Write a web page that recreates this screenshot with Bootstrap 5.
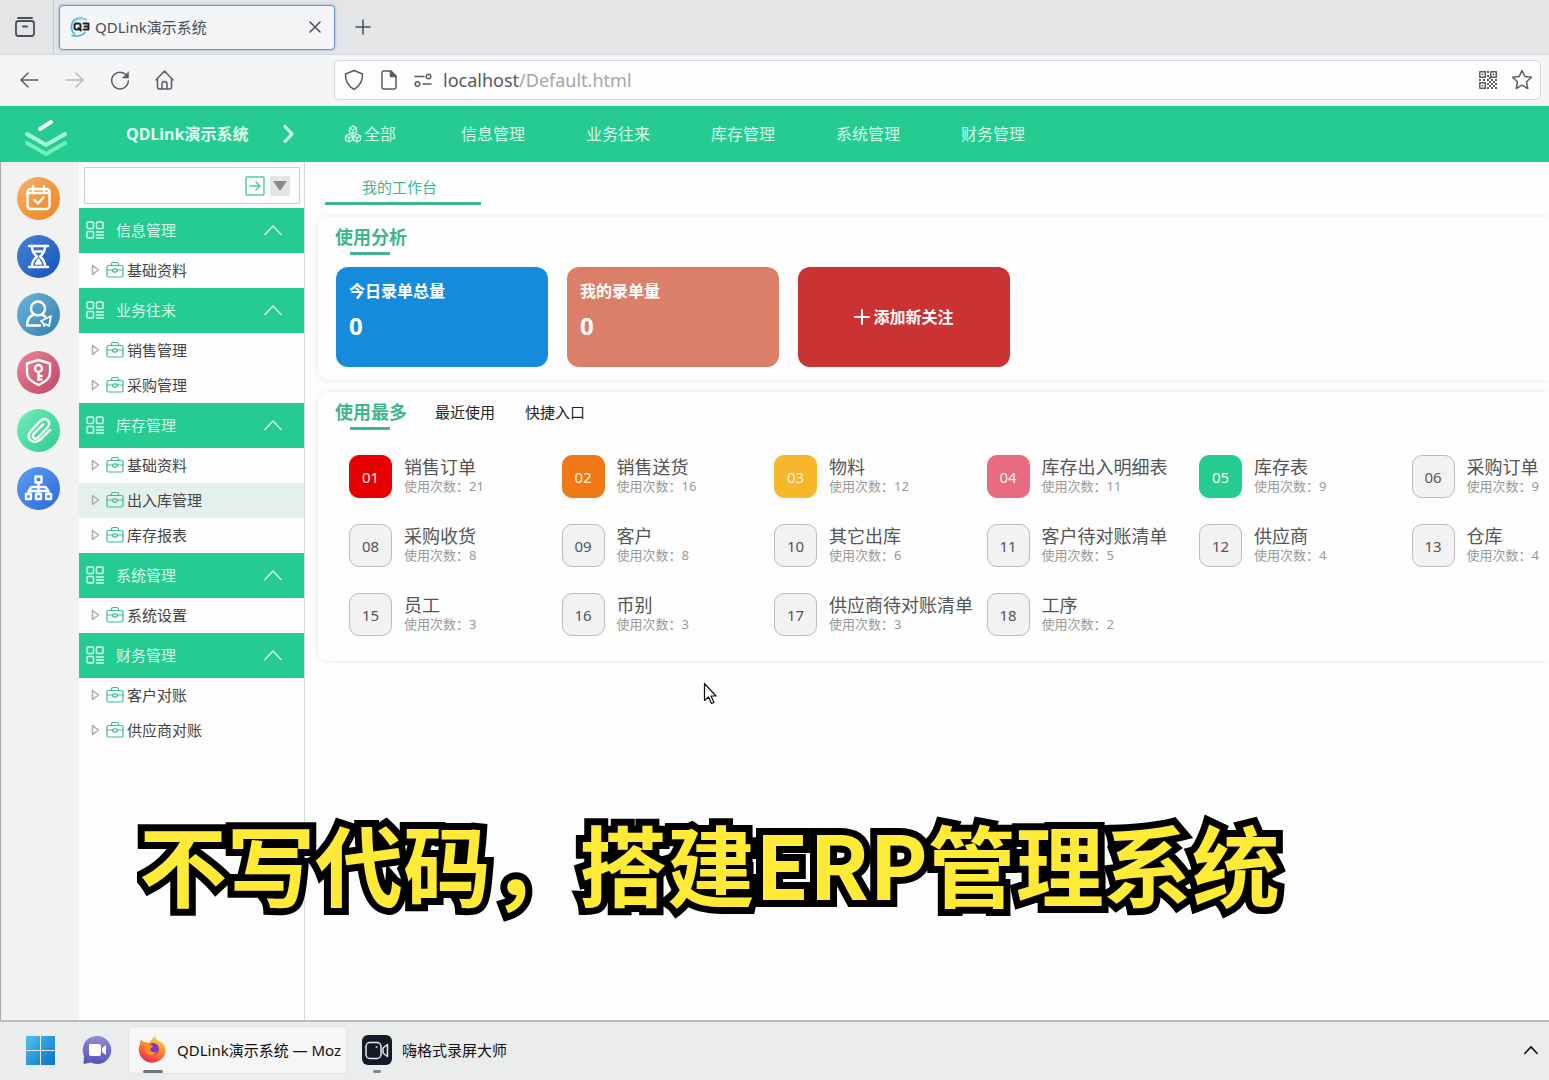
<!DOCTYPE html>
<html lang="zh-CN">
<head>
<meta charset="utf-8">
<meta name="viewport" content="width=device-width, initial-scale=1">
<title>QDLink演示系统</title>
<link href="https://cdn.jsdelivr.net/npm/bootstrap@5.3.0/dist/css/bootstrap.min.css" rel="stylesheet">
<style>
:root{--brand:#26cb92;--brand-ink:#3fb68f}
body{font-family:"Noto Sans","Noto Sans CJK SC",sans-serif;font-size:15px;line-height:20px;color:#444;background:#fdfdfd}
svg{display:block;flex:none;fill:none;stroke:currentColor;stroke-width:1.5;stroke-linecap:round;stroke-linejoin:round}
button{font:inherit;color:inherit;background:none;border:0;padding:0}
a{color:inherit;text-decoration:none}
.i16{width:16px;height:16px}.i18{width:18px;height:18px}.i20{width:20px;height:20px}.i22{width:22px;height:22px}
.desk{min-height:100vh}
/* browser chrome */
.tabstrip{height:55px;background:#e3e5e7;border-bottom:1px solid #d3d6da;color:#4a4e5a}
.tabstrip .lib{width:54px;height:54px;border-right:1px solid #c6cad0;padding-left:14px}
.tabstrip .lib svg{stroke-width:1.8}
.tabbox{width:276px;height:45px;margin-left:5px;padding:0 11px 0 9px;background:#f3f5f7;border:1px solid #6d95c8;border-radius:4px;box-shadow:0 0 3px #8aa5c8}
.toolbar{height:51px;background:#f3f5f7;color:#5a5d62;padding:0 8px 2px 19px}
.toolbar .navs{width:315px;gap:23px}
.toolbar .off{color:#b7babd}
.addr{height:40px;background:#fdfdfe;border:1px solid #d5dade;border-radius:5px;padding:0 7px 0 8px;gap:13px}
.addr .url{font-size:18px;color:#a3a6a9;margin-left:-3px}.addr .url b{font-weight:400;color:#56595d}
/* application header */
.apphead{height:56px;background:var(--brand);color:#d3faea;font-size:16px}
.apphead .logo{width:44px;height:40px;margin:9px 0 0 24px;stroke-width:4}
.apphead .title{margin-left:58px;width:156px;font-weight:700;color:#e0fcf1}
.apphead .menu{gap:60px;margin-left:48px}
.apphead .menu a{width:65px;white-space:nowrap}
.apphead .menu a.all{width:57px}
.apphead .all svg{stroke-width:1.3;margin-right:2px}
.apphead .chev{width:14px;height:18px;stroke-width:3}
/* rail */
.rail{width:79px;background:#f2f2f2;border-left:1px solid #aaa;padding:15px 0 0 16px;gap:15px}
.rail button{width:43px;height:43px;border-radius:50%;color:#fff}
.rail svg{width:29px;height:29px;stroke-width:2.4}
.c1{background:linear-gradient(135deg,#f4b169,#ef841d)}.c2{background:linear-gradient(135deg,#4a83d3,#1452bf)}
.c3{background:linear-gradient(135deg,#67b5da,#397fae)}.c4{background:linear-gradient(135deg,#ea8598,#bd4764)}
.c5{background:linear-gradient(135deg,#72edba,#2dcc91)}.c6{background:linear-gradient(135deg,#5b9df4,#2d69de)}
/* side menu */
.side{width:226px;border-right:1px solid #d4d4d4}
.search{height:37px;margin:5px 4px 4px 5px;border:1px solid #cfcfcf;padding:0 9px 0 8px;gap:5px}
.search input{border:0;outline:0;background:none;min-width:0}
.search button{flex:none;color:#58c9a2}
.search .drop{width:20px;height:20px;background:#e3e4e6;border-radius:2px}
.tri{width:14px;height:10px;fill:#8a8a8a;stroke:none}
.grp{height:45px;background:var(--brand);color:#d3faea;padding:0 22px 1px 7px}
.grp span{margin-left:12px}
.leaf{height:35px;padding:0 0 1px 12px}
.leaf.on{background:#e3f0eb}
.leaf .arr{width:9px;height:12px;color:#aaa;margin-right:6px}
.leaf .bag{width:18px;height:18px;color:#3fbf90;margin-right:3px;stroke-width:1.2}
/* content */
.worktab{width:156px;height:43px;margin-left:20px;border-bottom:3px solid var(--brand-ink);color:var(--brand-ink);line-height:50px;padding-left:37px;text-align:left}
.panelbox{margin:12px 0 0 13px;border-radius:10px 0 0 10px;box-shadow:0 0 6px rgba(0,0,0,.09);background:#fdfdfd;padding:10px 0 0 17px}
.h-on{font-size:18px;font-weight:700;color:var(--brand-ink);height:28px;width:70px;white-space:nowrap;text-align:left}
.h-on::after{content:"";display:block;width:40px;height:3px;margin:5px 0 0 15px;background:var(--brand-ink)}
.stats{gap:19px;margin:12px 0 0 1px;padding-bottom:13px}
.stat{width:212px;height:100px;border-radius:12px;color:#fff;padding:14px 13px;font-weight:700;font-size:16px}
.stat .num{font-size:24px;line-height:30px;margin-top:10px}
.s1{background:#168bdb}.s2{background:#dc7f69}.s3{background:#ca3233}
.s3 svg{stroke-width:2;margin-right:3px}
.usage{display:grid;grid-template-columns:repeat(6,1fr);row-gap:26px;margin:25px -75px 0 14px;padding-bottom:25px}
.usage a{gap:12px;height:43px;white-space:nowrap}
.usage span{padding-bottom:2px}
.usage i{font-style:normal;width:43px;height:43px;border-radius:10px;border:1px solid #bbb;background:#f2f2f3;color:#555;flex:none}
.usage .n1{background:#e60000;border-color:#e60000}.usage .n2{background:#f17817;border-color:#f17817}.usage .n3{background:#f6b72b;border-color:#f6b72b}
.usage .n4{background:#e96b82;border-color:#e96b82}.usage .n5{background:#26cb92;border-color:#26cb92}
.usage .n1,.usage .n2,.usage .n3,.usage .n4,.usage .n5{color:#fff2e0}
.usage strong{display:block;font-weight:400;font-size:18px;line-height:20px;color:#555}
.usage em{display:block;font-style:normal;font-size:13px;line-height:18px;color:#999}
.others{gap:30px;margin-left:30px;color:#222}
/* task bar */
.taskbar{height:60px;background:#ebecec;border-top:2px solid #b9bbbb;color:#111;padding:0 11px 2px 26px}
.taskbar .chat{margin:0 16px 0 26px}
.task{height:48px;padding:0 9px;border-radius:5px;gap:10px;margin-right:6px}
.task.on{width:219px;background:#f6f6f6;border:1px solid #e2e2e2;padding-right:3px}
.ico{height:46px;position:relative}
.ico::after{content:"";position:absolute;bottom:0;left:50%;transform:translateX(-50%);width:8px;height:3px;border-radius:2px;background:#888}
.task.on .ico::after{width:20px;background:#6c7a86}
.taskbar .more{width:14px;height:10px;stroke-width:2}
/* floating layers */
.subtitle{position:absolute;left:137px;top:778px;width:1160px;height:160px;pointer-events:none}
.subtitle text{font:700 88px "Noto Sans CJK SC",sans-serif;fill:#ffea37;stroke:#000;stroke-width:14px;paint-order:stroke;stroke-linejoin:miter;stroke-miterlimit:8}
.pointer{position:absolute;left:703px;top:682px;width:15px;height:23px;fill:#fff;stroke:#111;stroke-width:1.2}
</style>
<script src="https://cdn.jsdelivr.net/npm/bootstrap@5.3.0/dist/js/bootstrap.bundle.min.js" defer></script>
</head>
<body>
<svg class="d-none">
<symbol id="up" viewBox="0 0 18 12"><path d="M1 10.500 9 2l8 8.500"/></symbol>
<symbol id="grid" viewBox="0 0 18 18"><rect x="1" y="1" width="6.500" height="6.500" rx="1"/><rect x="10.500" y="1" width="6.500" height="6.500" rx="1"/><rect x="1" y="10.500" width="6.500" height="6.500" rx="1"/><path d="M10.500 11h7M10.500 14h7M10.500 17h7"/></symbol>
<symbol id="arr" viewBox="0 0 9 12"><path d="M1.500 1.500v9L7.500 6z"/></symbol>
<symbol id="bag" viewBox="0 0 18 18"><rect x="1" y="4.500" width="16" height="11.500" rx="1.500"/><path d="M5.500 4.500V3q0-1.500 1.500-1.500h4q1.500 0 1.500 1.500v1.500M1 9h5.500M11.500 9H17"/><ellipse cx="9" cy="9.500" rx="2.500" ry="1.600"/></symbol>
</svg>
<div class="desk d-flex flex-column position-relative overflow-hidden">
<header class="tabstrip d-flex align-items-center">
  <button class="lib" aria-label="标签页列表"><svg class="i22" viewBox="0 0 22 22"><path d="M4 2h14"/><rect x="2" y="5" width="18" height="15" rx="2.500"/><path d="M9 10.500h4"/></svg></button>
  <div class="tabbox d-flex align-items-center">
    <svg class="i22" viewBox="0 0 22 22"><path d="M17 3.500C11 0 3 3 2.500 10c-.2 3 .8 6 3 8M3 19.500c5 1 10 .5 13-3" stroke="#39b6d8" stroke-width="1.600"/><path d="M5 6q5-5 12-2" stroke="#8de0ec"/><rect x="5.500" y="7.500" width="6" height="6" rx="2" stroke="#222" stroke-width="2"/><path d="m9.500 12 2.500 2.500M14.500 7.500h5v6h-5M15.500 10.500h4" stroke="#222" stroke-width="1.900"/></svg>
    <span class="ms-1 flex-grow-1">QDLink演示系统</span>
    <button aria-label="关闭"><svg class="i16" viewBox="0 0 16 16"><path d="m3 3 10 10M13 3 3 13"/></svg></button>
  </div>
  <button class="ms-3 ps-1" aria-label="新建标签页"><svg class="i16" viewBox="0 0 16 16"><path d="M8 1v14M1 8h14"/></svg></button>
</header>
<div class="toolbar d-flex align-items-center">
  <div class="navs d-flex flex-shrink-0">
    <button aria-label="后退"><svg class="i22" viewBox="0 0 22 22"><path d="M19 11H2m7-7-7 7 7 7"/></svg></button>
    <button class="off" aria-label="前进"><svg class="i22" viewBox="0 0 22 22"><path d="M2 11h17m-7-7 7 7-7 7"/></svg></button>
    <button aria-label="刷新"><svg class="i22" viewBox="0 0 22 22"><path d="M18.500 8A8.300 8.300 0 1 0 19.300 12"/><path d="M19.500 3v6h-6z" fill="currentColor" stroke-width=".5"/></svg></button>
    <button aria-label="主页"><svg class="i22" viewBox="0 0 22 22"><path d="m2 11 8.500-9 8.500 9M3.500 9.500V18q0 2 2 2h10q2 0 2-2V9.500M8 20v-5q0-2.500 2.500-2.500T13 15v5"/></svg></button>
  </div>
  <div class="addr d-flex align-items-center flex-grow-1">
    <svg class="i22" viewBox="0 0 22 22"><path d="M11 1.500 19.500 5q.5 10-8.500 15.500Q2 15 2.500 5z"/></svg>
    <svg class="i22" viewBox="0 0 22 22"><path d="M4 4q0-2 2-2h7l5 5v11q0 2-2 2H6q-2 0-2-2z"/><path d="M12.500 2v5.500H18z" fill="currentColor"/></svg>
    <svg class="i20" viewBox="0 0 20 20"><path d="M2 6.500h9M10 14h8"/><circle cx="15.500" cy="6.500" r="2.300"/><circle cx="4.500" cy="14" r="2.300"/></svg>
    <a href="#" class="url flex-grow-1"><b>localhost</b>/Default.html</a>
    <svg class="i20" viewBox="0 0 20 20"><rect x="1.800" y="1.800" width="5.500" height="5.500"/><rect x="12.800" y="1.800" width="5.500" height="5.500"/><rect x="1.800" y="12.800" width="5.500" height="5.500"/><g fill="currentColor" stroke="none"><path d="M3.800 3.800h1.500v1.500H3.800zM14.800 3.800h1.500v1.500h-1.500zM3.800 14.800h1.500v1.500H3.800zM9 1h2v2H9zM9 5h2v2H9zM11 7h2v2h-2zM9 9h2v2H9zM1 9h2v2H1zM5 9h2v2H5zM13 9h2v2h-2zM17 9h2v2h-2zM11 11h2v2h-2zM15 11h2v2h-2zM9 13h2v2H9zM13 13h2v2h-2zM17 13h2v2h-2zM11 15h2v2h-2zM15 15h2v2h-2zM9 17h2v2H9zM13 17h2v2h-2zM17 17h2v2h-2z"/></g></svg>
    <svg class="i22" viewBox="0 0 22 22"><path d="m11 1.500 2.800 6 6.700.8-5 4.500 1.300 6.700-5.800-3.300-5.800 3.300 1.300-6.700-5-4.500 6.700-.8z"/></svg>
  </div>
</div>

<nav class="apphead d-flex align-items-center">
  <svg class="logo" viewBox="0 0 44 40"><path d="m16 10 11-7" stroke="#e4fff5"/><path d="m3 15 19 11 19-11" stroke="#a9f9da"/><path d="m3 24 19 11 19-11" stroke="#6ff0bd"/></svg>
  <a href="#" class="title">QDLink演示系统</a>
  <svg class="chev" viewBox="0 0 14 18"><path d="m3 1.500 7 7.500-7 7.500"/></svg>
  <div class="menu d-flex">
    <a href="#" class="all d-flex align-items-center"><svg class="i18" viewBox="0 0 18 18"><path d="m9 1 3.500 2v4L9 9 5.500 7V3zM5 9l3.500 2v4L5 17l-3.500-2v-4zM13 9l3.500 2v4L13 17l-3.500-2v-4zM5.500 3 9 5l3.500-2M9 5v4M1.500 11 5 13l3.500-2M5 13v4M9.500 11l3.500 2 3.500-2M13 13v4"/></svg>全部</a>
    <a href="#">信息管理</a><a href="#">业务往来</a><a href="#">库存管理</a><a href="#">系统管理</a><a href="#">财务管理</a>
  </div>
</nav>

<div class="d-flex flex-grow-1">
  <aside class="rail d-flex flex-column flex-shrink-0">
    <button class="c1 d-flex align-items-center justify-content-center" aria-label="日程"><svg viewBox="0 0 29 29"><rect x="3.500" y="5" width="22" height="20" rx="3"/><path d="M9 2v6M20 2v6M4 9h21M10.500 16l3.500 3.500 5.500-6"/></svg></button>
    <button class="c2 d-flex align-items-center justify-content-center" aria-label="待办"><svg viewBox="0 0 29 29"><path d="M5 4h19M5 25h19M8 5c0 5 2 7 5 9.500C10 17 8 19 8 24M21 5c0 5-2 7-5 9.500 3 2.500 5 4.500 5 9.500"/><path d="m11.500 22 3-5 3 5z" fill="currentColor" stroke-width="1.500"/><path d="M11.500 9.500h6"/></svg></button>
    <button class="c3 d-flex align-items-center justify-content-center" aria-label="用户"><svg viewBox="0 0 29 29"><circle cx="14" cy="8.500" r="7"/><path d="M10 14.500Q3 17 3 25.500h13M18 14.500l3 2"/><path d="m17 21 10-5-2 10-4-2-1 2-1-3z" stroke-width="1.800"/></svg></button>
    <button class="c4 d-flex align-items-center justify-content-center" aria-label="权限"><svg viewBox="0 0 29 29"><path d="M14.500 2 26 5.500V15q0 7-11.500 12Q3 22 3 15V5.500z"/><circle cx="14.500" cy="10.500" r="3.500"/><path d="M14.500 14v8M15 18h2.500M15 21.500h2.500"/></svg></button>
    <button class="c5 d-flex align-items-center justify-content-center" aria-label="附件"><svg viewBox="0 0 29 29"><path d="m26 14-9.500 9.500c-7 6-16-1-10-8L16 5c6-5 12.500 1 7 7l-9 9.500c-3 3-7-.5-4-4l9-9"/></svg></button>
    <button class="c6 d-flex align-items-center justify-content-center" aria-label="组织"><svg viewBox="0 0 29 29"><rect x="11.500" y="2.500" width="6" height="6"/><rect x="2" y="20" width="5" height="5"/><rect x="12" y="20" width="5" height="5"/><rect x="22" y="20" width="5" height="5"/><path d="M14.500 9v10M4.500 19v-2l3-4h14l3 4v2M4.500 17h20"/></svg></button>
  </aside>
  <aside class="side flex-shrink-0">
    <div class="search d-flex align-items-center">
      <input type="text" aria-label="搜索菜单" class="flex-grow-1">
      <button aria-label="跳转"><svg class="i20" viewBox="0 0 20 20"><rect x="1" y="1" width="18" height="18" rx="1"/><path d="M5 10h10m-4-4 4 4-4 4"/></svg></button>
      <button class="drop d-flex align-items-center justify-content-center" aria-label="展开"><svg class="tri" viewBox="0 0 14 10"><path d="M0 0h14L7 10z"/></svg></button>
    </div>
    <a href="#" class="grp d-flex align-items-center"><svg class="i18"><use href="#grid"/></svg><span class="flex-grow-1">信息管理</span><svg width="18" height="12"><use href="#up"/></svg></a>
    <a href="#" class="leaf d-flex align-items-center"><svg class="arr"><use href="#arr"/></svg><svg class="bag"><use href="#bag"/></svg>基础资料</a>
    <a href="#" class="grp d-flex align-items-center"><svg class="i18"><use href="#grid"/></svg><span class="flex-grow-1">业务往来</span><svg width="18" height="12"><use href="#up"/></svg></a>
    <a href="#" class="leaf d-flex align-items-center"><svg class="arr"><use href="#arr"/></svg><svg class="bag"><use href="#bag"/></svg>销售管理</a>
    <a href="#" class="leaf d-flex align-items-center"><svg class="arr"><use href="#arr"/></svg><svg class="bag"><use href="#bag"/></svg>采购管理</a>
    <a href="#" class="grp d-flex align-items-center"><svg class="i18"><use href="#grid"/></svg><span class="flex-grow-1">库存管理</span><svg width="18" height="12"><use href="#up"/></svg></a>
    <a href="#" class="leaf d-flex align-items-center"><svg class="arr"><use href="#arr"/></svg><svg class="bag"><use href="#bag"/></svg>基础资料</a>
    <a href="#" class="leaf on d-flex align-items-center"><svg class="arr"><use href="#arr"/></svg><svg class="bag"><use href="#bag"/></svg>出入库管理</a>
    <a href="#" class="leaf d-flex align-items-center"><svg class="arr"><use href="#arr"/></svg><svg class="bag"><use href="#bag"/></svg>库存报表</a>
    <a href="#" class="grp d-flex align-items-center"><svg class="i18"><use href="#grid"/></svg><span class="flex-grow-1">系统管理</span><svg width="18" height="12"><use href="#up"/></svg></a>
    <a href="#" class="leaf d-flex align-items-center"><svg class="arr"><use href="#arr"/></svg><svg class="bag"><use href="#bag"/></svg>系统设置</a>
    <a href="#" class="grp d-flex align-items-center"><svg class="i18"><use href="#grid"/></svg><span class="flex-grow-1">财务管理</span><svg width="18" height="12"><use href="#up"/></svg></a>
    <a href="#" class="leaf d-flex align-items-center"><svg class="arr"><use href="#arr"/></svg><svg class="bag"><use href="#bag"/></svg>客户对账</a>
    <a href="#" class="leaf d-flex align-items-center"><svg class="arr"><use href="#arr"/></svg><svg class="bag"><use href="#bag"/></svg>供应商对账</a>
  </aside>
  <main class="flex-grow-1 overflow-hidden">
    <button class="worktab d-block">我的工作台</button>
    <section class="panelbox">
      <div class="h-on">使用分析</div>
      <div class="stats d-flex">
        <div class="stat s1"><div>今日录单总量</div><div class="num">0</div></div>
        <div class="stat s2"><div>我的录单量</div><div class="num">0</div></div>
        <button class="stat s3 d-flex align-items-center justify-content-center"><svg class="i16" viewBox="0 0 16 16"><path d="M8 1v14M1 8h14"/></svg>添加新关注</button>
      </div>
    </section>
    <section class="panelbox">
      <div class="d-flex align-items-start">
        <button class="h-on">使用最多</button>
        <div class="others d-flex"><button>最近使用</button><button>快捷入口</button></div>
      </div>
      <div class="usage">
        <a href="#" class="d-flex align-items-center"><i class="n1 d-flex align-items-center justify-content-center">01</i><span><strong>销售订单</strong><em>使用次数：21</em></span></a>
        <a href="#" class="d-flex align-items-center"><i class="n2 d-flex align-items-center justify-content-center">02</i><span><strong>销售送货</strong><em>使用次数：16</em></span></a>
        <a href="#" class="d-flex align-items-center"><i class="n3 d-flex align-items-center justify-content-center">03</i><span><strong>物料</strong><em>使用次数：12</em></span></a>
        <a href="#" class="d-flex align-items-center"><i class="n4 d-flex align-items-center justify-content-center">04</i><span><strong>库存出入明细表</strong><em>使用次数：11</em></span></a>
        <a href="#" class="d-flex align-items-center"><i class="n5 d-flex align-items-center justify-content-center">05</i><span><strong>库存表</strong><em>使用次数：9</em></span></a>
        <a href="#" class="d-flex align-items-center"><i class="d-flex align-items-center justify-content-center">06</i><span><strong>采购订单</strong><em>使用次数：9</em></span></a>
        <a href="#" class="d-flex align-items-center"><i class="d-flex align-items-center justify-content-center">08</i><span><strong>采购收货</strong><em>使用次数：8</em></span></a>
        <a href="#" class="d-flex align-items-center"><i class="d-flex align-items-center justify-content-center">09</i><span><strong>客户</strong><em>使用次数：8</em></span></a>
        <a href="#" class="d-flex align-items-center"><i class="d-flex align-items-center justify-content-center">10</i><span><strong>其它出库</strong><em>使用次数：6</em></span></a>
        <a href="#" class="d-flex align-items-center"><i class="d-flex align-items-center justify-content-center">11</i><span><strong>客户待对账清单</strong><em>使用次数：5</em></span></a>
        <a href="#" class="d-flex align-items-center"><i class="d-flex align-items-center justify-content-center">12</i><span><strong>供应商</strong><em>使用次数：4</em></span></a>
        <a href="#" class="d-flex align-items-center"><i class="d-flex align-items-center justify-content-center">13</i><span><strong>仓库</strong><em>使用次数：4</em></span></a>
        <a href="#" class="d-flex align-items-center"><i class="d-flex align-items-center justify-content-center">15</i><span><strong>员工</strong><em>使用次数：3</em></span></a>
        <a href="#" class="d-flex align-items-center"><i class="d-flex align-items-center justify-content-center">16</i><span><strong>币别</strong><em>使用次数：3</em></span></a>
        <a href="#" class="d-flex align-items-center"><i class="d-flex align-items-center justify-content-center">17</i><span><strong>供应商待对账清单</strong><em>使用次数：3</em></span></a>
        <a href="#" class="d-flex align-items-center"><i class="d-flex align-items-center justify-content-center">18</i><span><strong>工序</strong><em>使用次数：2</em></span></a>
      </div>
    </section>
  </main>
</div>

<footer class="taskbar d-flex align-items-center">
  <button aria-label="开始"><svg width="30" height="30" viewBox="0 0 30 30"><defs><linearGradient id="w" x1="0" y1="0" x2="1" y2="1"><stop stop-color="#4cc4f1"/><stop offset="1" stop-color="#0a6fc6"/></linearGradient></defs><path stroke="none" fill="url(#w)" d="M0 1h14v14H0zM15 1h14v14h-14zM0 16h14v14H0zM15 16h14v14h-14z"/></svg></button>
  <button class="chat" aria-label="聊天"><svg width="30" height="30" viewBox="0 0 30 30"><defs><linearGradient id="t" x1="0" y1="0" x2="0" y2="1"><stop stop-color="#8d8fd6"/><stop offset="1" stop-color="#5553b4"/></linearGradient></defs><g stroke="none"><path fill="url(#t)" d="M15 1a14 14 0 1 1-6 26.500L1.500 29l.5-8A14 14 0 0 1 15 1z"/><rect x="7" y="9" width="12" height="12" rx="2" fill="#fff"/><path fill="#fff" d="m20 13 4-3v10l-4-3z"/></g></svg></button>
  <button class="task on d-flex align-items-center">
    <span class="ico d-flex align-items-center"><svg width="29" height="30" viewBox="0 0 29 30"><defs><linearGradient id="f" x1=".8" y1="0" x2=".3" y2="1"><stop stop-color="#ffe23c"/><stop offset=".45" stop-color="#ff8a28"/><stop offset="1" stop-color="#ec2456"/></linearGradient></defs><g stroke="none"><path fill="url(#f)" d="M3 4q1 3 4 3l4 1q3-4 6-7 1 4 5 6 3 0 4 3 2 4 1.500 8A13.500 12.500 0 0 1 1 17q-.5-5 1-8 0-3 1-5z"/><circle cx="15" cy="14" r="6" fill="#7c3cc8"/><path fill="#ff8a2e" d="M7 9q4-1 8 2-1 2-3 3 1 4 7 3-4 6-11 1-3-3-1-9z"/></g></svg></span>
    <span class="text-nowrap">QDLink演示系统 — Moz</span>
  </button>
  <button class="task d-flex align-items-center">
    <span class="ico d-flex align-items-center"><svg width="30" height="30" viewBox="0 0 30 30"><rect width="30" height="30" rx="6" fill="#151a28" stroke="none"/><g stroke="#e8ebf2"><rect x="4" y="7.500" width="15" height="16" rx="4"/><path d="m21 13 4.500-3.500v12L21 18z"/></g><circle cx="14.500" cy="12" r="1" fill="#d7e34a" stroke="none"/></svg></span>
    <span class="text-nowrap">嗨格式录屏大师</span>
  </button>
  <button class="ms-auto" aria-label="显示隐藏的图标"><svg class="more" viewBox="0 0 18 12"><path d="M1 10.500 9 2l8 8.500"/></svg></button>
</footer>
<svg class="subtitle"><text x="2" y="122">不写代码，搭建ERP管理系统</text></svg>
<svg class="pointer" viewBox="0 0 15 23"><path d="M1.500 1.500v17l4-3.500 3 6.500 2.500-1-3-6.500h5z"/></svg>
</div>
</body>
</html>
